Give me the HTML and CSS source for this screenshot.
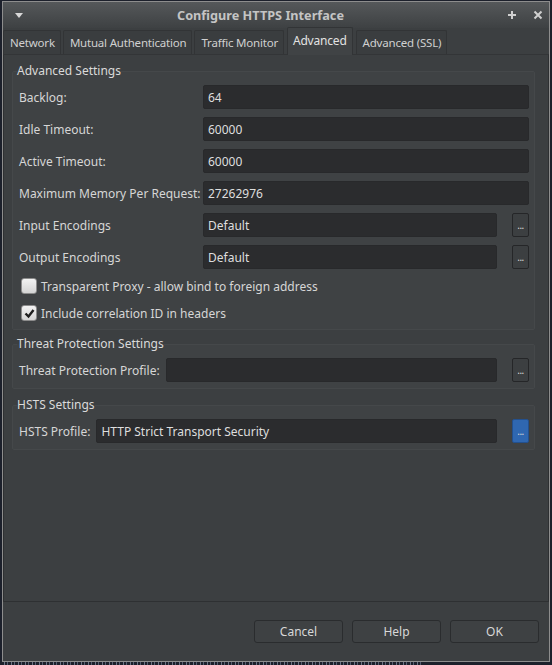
FILE: index.html
```html
<!DOCTYPE html>
<html>
<head>
<meta charset="utf-8">
<link rel="stylesheet" href="styles.css">
</head>
<body>
<div class="window">
  <div class="titlebar">
    <svg class="tb-menu" width="10" height="8" viewBox="0 0 10 8"><path d="M1 2 L9 2 L5 7 Z" fill="#d8d8d8"/></svg>
    <div class="title">Configure HTTPS Interface</div>
    <div class="tb-right">
      <svg width="10" height="10" viewBox="0 0 10 10"><path d="M5 1 V9 M1 5 H9" stroke="#d0d0d0" stroke-width="2"/></svg>
      <svg width="10" height="10" viewBox="0 0 10 10"><path d="M1.5 1.5 L8.5 8.5 M8.5 1.5 L1.5 8.5" stroke="#d0d0d0" stroke-width="2"/></svg>
    </div>
  </div>
  <div class="tabs">
    <div class="tab">Network</div>
    <div class="tab">Mutual Authentication</div>
    <div class="tab">Traffic Monitor</div>
    <div class="tab active">Advanced</div>
    <div class="tab">Advanced (SSL)</div>
  </div>
  <div class="pane">
    <fieldset class="group g1">
      <legend>Advanced Settings</legend>
      <div class="grid">
        <label>Backlog:</label><div class="field">64</div>
        <label>Idle Timeout:</label><div class="field">60000</div>
        <label>Active Timeout:</label><div class="field">60000</div>
        <label>Maximum Memory Per Request:</label><div class="field">27262976</div>
        <label>Input Encodings</label><div class="fbtn"><div class="field">Default</div><div class="dots">...</div></div>
        <label>Output Encodings</label><div class="fbtn"><div class="field">Default</div><div class="dots">...</div></div>
      </div>
      <div class="check first"><span class="box"></span>Transparent Proxy - allow bind to foreign address</div>
      <div class="check"><span class="box checked"><svg width="13" height="13" viewBox="0 0 13 13"><path d="M2.5 6.5 L5.5 9.5 L10.5 3" fill="none" stroke="#1e1e1e" stroke-width="2.4"/></svg></span>Include correlation ID in headers</div>
    </fieldset>
    <fieldset class="group g2">
      <legend>Threat Protection Settings</legend>
      <div class="row"><label>Threat Protection Profile:</label><div class="field"></div><div class="dots">...</div></div>
    </fieldset>
    <fieldset class="group g3">
      <legend>HSTS Settings</legend>
      <div class="row"><label>HSTS Profile:</label><div class="field">HTTP Strict Transport Security</div><div class="dots blue">...</div></div>
    </fieldset>
  </div>
  <div class="buttons">
    <div class="btn">Cancel</div>
    <div class="btn">Help</div>
    <div class="btn">OK</div>
  </div>
</div>
<div class="desk"></div>
</body>
</html>
```
FILE: styles.css
```css
html, body {
  margin: 0;
  padding: 0;
}
body {
  width: 552px;
  height: 665px;
  overflow: hidden;
  background: #1c202b;
  font-family: "Noto Sans", "Open Sans", sans-serif;
  font-size: 12px;
  color: #d6d6d6;
}
.window {
  margin: 1px 0 0 2px;
  width: 546px;
  height: 659px;
  border: 1px solid #8d8d8d;
  background: #3c3f41;
  display: flex;
  flex-direction: column;
}
.titlebar {
  height: 26px;
  background: linear-gradient(#55585a, #3e4143);
  display: flex;
  align-items: center;
}
.tb-menu {
  margin-left: 11px;
}
.title {
  flex: 1;
  text-align: center;
  font-weight: bold;
  color: #c4c4c4;
  font-size: 12.7px;
  margin-right: 10px;
}
.tb-right {
  display: flex;
  gap: 16px;
  margin-right: 6px;
  align-items: center;
}
.tabs {
  display: flex;
  height: 26px;
  align-items: flex-end;
  gap: 2px;
  font-size: 11.5px;
  letter-spacing: -0.2px;
}
.tab {
  height: 24px;
  box-sizing: border-box;
  padding: 0 5px 0 6px;
  display: flex;
  align-items: center;
  border: 1px solid #323436;
  border-bottom: none;
  border-radius: 2px 2px 0 0;
  background: #3a3d3f;
  color: #d0d0d0;
}
.tab.active {
  height: 28px;
  padding: 0 5px 3px 5px;
  background: #404345;
  color: #e2e2e2;
  margin: 0 1px;
  position: relative;
  top: 1px;
  font-size: 12px;
}
.pane {
  flex: 0 0 548px;
  box-sizing: border-box;
  border: 1px solid #2e3032;
  border-top-color: #333537;
  padding: 8px 13px 0 8px;
  background: #3c3f41;
}
.group {
  margin: 0;
  border: 1px solid #45484a;
  border-radius: 2px;
  background: #3f4244;
  padding: 0 5px 6px 5px;
}
.group legend {
  padding: 0;
  margin-left: -1px;
  color: #dadada;
  line-height: 16px;
}
.g1 { padding-top: 6px; }
.g2 { margin-top: 6px; padding-top: 6px; padding-bottom: 6px; }
.g3 { margin-top: 8px; padding-top: 6px; padding-bottom: 6px; }
.grid {
  display: grid;
  grid-template-columns: 185px 1fr;
  row-gap: 8px;
  align-items: center;
}
.grid label {
  padding-left: 1px;
}
.field {
  height: 24px;
  box-sizing: border-box;
  background: #2b2c2e;
  border: 1px solid #28292b;
  border-radius: 2px;
  padding: 0 4px;
  display: flex;
  align-items: center;
  color: #dedede;
}
.fbtn {
  display: flex;
  gap: 15px;
  align-items: center;
}
.fbtn .field, .row .field {
  flex: 1;
}
.dots {
  width: 17px;
  height: 24px;
  box-sizing: border-box;
  border: 1px solid #252628;
  border-radius: 2px;
  background: #3c3f41;
  font-size: 10px;
  display: flex;
  align-items: center;
  justify-content: center;
  color: #d8d8d8;
  letter-spacing: -0.5px;
}
.dots.blue {
  background: #2f67b1;
  border-color: #23508e;
}
.check {
  display: flex;
  align-items: center;
  gap: 4px;
  height: 20px;
  margin-left: 3px;
}
.check.first {
  margin-top: 7px;
  margin-bottom: 7px;
}
.box {
  width: 14px;
  height: 14px;
  border: 1px solid #8c8c8c;
  border-radius: 3px;
  background: linear-gradient(#f2f2f2, #d4d4d4);
  display: flex;
  align-items: center;
  justify-content: center;
}
.row {
  display: flex;
  align-items: center;
  gap: 6px;
}
.row label {
  padding-left: 1px;
}
.row .dots {
  margin-left: 9px;
}
.buttons {
  flex: 1;
  display: flex;
  justify-content: flex-end;
  gap: 9px;
  padding: 18px 10px 0 0;
}
.btn {
  width: 89px;
  height: 23px;
  box-sizing: border-box;
  border: 1px solid #2a2c2e;
  border-radius: 3px;
  background: #3e4143;
  display: flex;
  align-items: center;
  justify-content: center;
  color: #d8d8d8;
}
.desk {
  height: 4px;
  margin-left: 4px;
  width: 420px;
  background: repeating-linear-gradient(90deg, #8e98ad 0 1px, transparent 1px 3px, #6f7a90 3px 4px, transparent 4px 7px);
  opacity: 0.7;
}
```
